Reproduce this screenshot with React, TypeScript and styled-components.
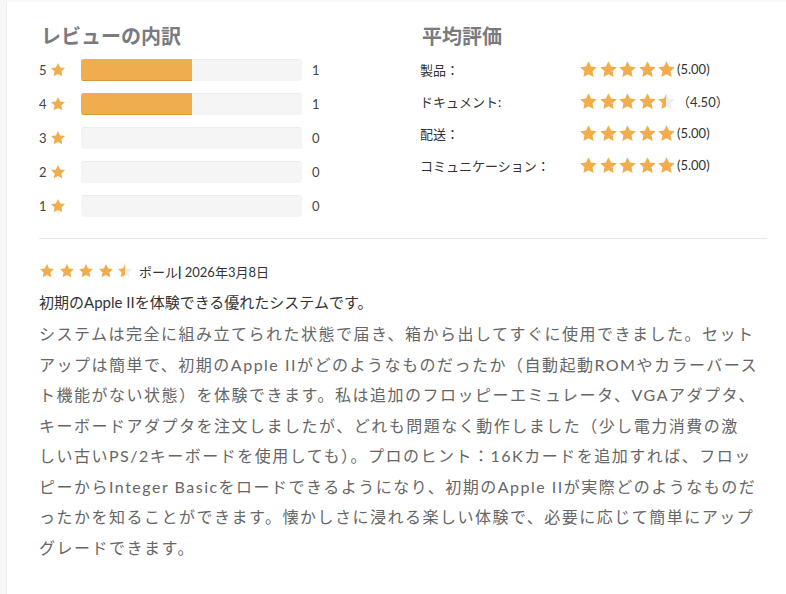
import React from 'react';
import styled, { createGlobalStyle } from 'styled-components';

const GlobalStyle = createGlobalStyle`
  html, body {
    margin: 0;
    padding: 0;
    background: #ffffff;
  }
  body {
    font-family: "Lato", "Noto Sans CJK JP", sans-serif;
    color: #333;
  }
`;

const STAR_COLOR = '#f0ad4e';
const STAR_EMPTY = '#eeeeee';

const Page = styled.div`
  min-height: 594px;
  box-sizing: border-box;
  border-left: 6px solid #f7f7f7;
  border-top: 2px solid #f8f8f8;
  box-shadow: inset 1px 0 0 #ececec;
  padding: 20px 19px 0 33px;
`;

const Summary = styled.section`
  display: grid;
  grid-template-columns: 381px 1fr;
  padding-bottom: 15px;
  border-bottom: 1px solid #e6e6e6;
`;

const Heading = styled.h3`
  margin: 0 0 3px 2px;
  font-size: 20px;
  line-height: 28px;
  font-weight: 700;
  color: #797b80;
`;

const BreakdownRow = styled.div`
  display: flex;
  align-items: center;
  height: 34px;
  font-size: 13px;
  color: #444;
`;

const StarLabel = styled.span`
  display: flex;
  align-items: center;
  gap: 3px;
  width: 42px;
`;

const Bar = styled.div`
  width: 221px;
  height: 22px;
  background: #f5f5f5;
  border-radius: 3px;
  box-shadow: inset 0 1px 1px rgba(0, 0, 0, 0.04);
  overflow: hidden;
`;

const BarFill = styled.div`
  height: 100%;
  background: ${STAR_COLOR};
  border-bottom: 1px solid #d99a3f;
  box-sizing: border-box;
`;

const Count = styled.span`
  margin-left: 10px;
`;

const AverageRow = styled.div`
  display: flex;
  align-items: center;
  height: 32px;
  font-size: 13px;
  color: #333;
`;

const AverageLabel = styled.span`
  width: 159px;
`;

const Stars = styled.span<{ $gap: number }>`
  display: inline-flex;
  align-items: center;
  gap: ${p => p.$gap}px;
`;

const Score = styled.span`
  margin-left: 1px;
  font-size: 13px;
`;

const Review = styled.article`
  padding-top: 22px;
`;

const ReviewMeta = styled.div`
  display: flex;
  align-items: center;
  height: 20px;
  gap: 6px;
  font-size: 13px;
  color: #333;
`;

const Divider = styled.span`
  color: #222;
  font-weight: 700;
`;

const ReviewTitle = styled.h4`
  margin: 11px 0 7px;
  font-size: 15px;
  line-height: 20px;
  font-weight: 400;
  color: #333;
`;

const ReviewBody = styled.p`
  margin: 0;
  font-size: 16px;
  line-height: 30.5px;
  letter-spacing: 1.5px;
  color: #666;
`;

const BodyLine = styled.span`
  display: block;
  white-space: nowrap;
`;

let gradId = 0;

const Star: React.FC<{ size: number; fill: number }> = ({ size, fill }) => {
  const id = `half-${gradId++}`;
  const points = '12,1.5 15.2,8.2 22.5,9.1 17.1,14.2 18.5,21.5 12,17.9 5.5,21.5 6.9,14.2 1.5,9.1 8.8,8.2';
  return (
    <svg width={size} height={size} viewBox="0 0 24 24">
      {fill > 0 && fill < 1 && (
        <defs>
          <linearGradient id={id} x1="0" x2="1" y1="0" y2="0">
            <stop offset={fill} stopColor={STAR_COLOR} />
            <stop offset={fill} stopColor={STAR_EMPTY} />
          </linearGradient>
        </defs>
      )}
      <polygon
        points={points}
        fill={fill >= 1 ? STAR_COLOR : fill <= 0 ? STAR_EMPTY : `url(#${id})`}
      />
    </svg>
  );
};

const StarRating: React.FC<{ value: number; size: number; gap: number }> = ({ value, size, gap }) => (
  <Stars $gap={gap}>
    {[0, 1, 2, 3, 4].map(i => (
      <Star key={i} size={size} fill={Math.max(0, Math.min(1, value - i))} />
    ))}
  </Stars>
);

const breakdown = [
  { stars: 5, count: 1 },
  { stars: 4, count: 1 },
  { stars: 3, count: 0 },
  { stars: 2, count: 0 },
  { stars: 1, count: 0 },
];
const total = breakdown.reduce((s, b) => s + b.count, 0);

const averages = [
  { label: '製品：', value: 5, score: '(5.00)' },
  { label: 'ドキュメント:', value: 4.5, score: '（4.50）' },
  { label: '配送：', value: 5, score: '(5.00)' },
  { label: 'コミュニケーション：', value: 5, score: '(5.00)' },
];

// the review text, broken where the shop page breaks it
const reviewLines = [
  'システムは完全に組み立てられた状態で届き、箱から出してすぐに使用できました。セット',
  'アップは簡単で、初期のApple IIがどのようなものだったか（自動起動ROMやカラーバース',
  'ト機能がない状態）を体験できます。私は追加のフロッピーエミュレータ、VGAアダプタ、',
  'キーボードアダプタを注文しましたが、どれも問題なく動作しました（少し電力消費の激',
  'しい古いPS/2キーボードを使用しても）。プロのヒント：16Kカードを追加すれば、フロッ',
  'ピーからInteger Basicをロードできるようになり、初期のApple IIが実際どのようなものだ',
  'ったかを知ることができます。懐かしさに浸れる楽しい体験で、必要に応じて簡単にアップ',
  'グレードできます。',
];

const App: React.FC = () => (
  <>
    <GlobalStyle />
    <Page>
      <Summary>
        <div>
          <Heading>レビューの内訳</Heading>
          {breakdown.map(b => (
            <BreakdownRow key={b.stars}>
              <StarLabel>
                {b.stars}
                <Star size={16} fill={1} />
              </StarLabel>
              <Bar>
                {b.count > 0 && <BarFill style={{ width: `${(b.count / total) * 100}%` }} />}
              </Bar>
              <Count>{b.count}</Count>
            </BreakdownRow>
          ))}
        </div>
        <div>
          <Heading>平均評価</Heading>
          {averages.map(a => (
            <AverageRow key={a.label}>
              <AverageLabel>{a.label}</AverageLabel>
              <StarRating value={a.value} size={19} gap={0.5} />
              <Score>{a.score}</Score>
            </AverageRow>
          ))}
        </div>
      </Summary>
      <Review>
        <ReviewMeta>
          <StarRating value={4.5} size={16} gap={3.5} />
          <span>
            ポール<Divider>|</Divider> 2026年3月8日
          </span>
        </ReviewMeta>
        <ReviewTitle>初期のApple IIを体験できる優れたシステムです。</ReviewTitle>
        <ReviewBody>
          {reviewLines.map(line => (
            <BodyLine key={line}>{line}</BodyLine>
          ))}
        </ReviewBody>
      </Review>
    </Page>
  </>
);

export default App;
